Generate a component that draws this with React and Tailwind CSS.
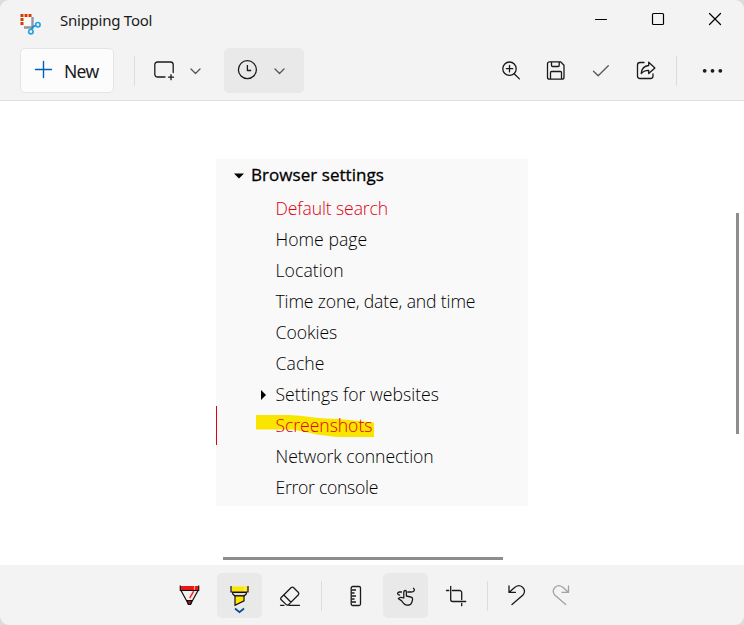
import React from "react";

function Icon({ size = 24, className = "", children }) {
  return (
    <svg width={size} height={size} viewBox={`0 0 ${size} ${size}`} fill="none" stroke="currentColor" strokeWidth="1.3" strokeLinecap="round" strokeLinejoin="round" className={`shrink-0 ${className}`}>
      {children}
    </svg>
  );
}

function Chevron({ className }) {
  return (
    <Icon size={12} className={className}>
      <path d="M1 4 5.500 8.500 10 4" />
    </Icon>
  );
}

function TitleBar() {
  return (
    <header className="flex h-[41px] shrink-0 items-start pl-[19px]">
      <svg width="24" height="24" viewBox="0 0 24 24" className="mt-[12px] shrink-0" fill="none">
        <path d="M3 13V3h10v10z" fill="#fafafa" />
        <path d="M13.500 5v10.500H5" stroke="#9298a0" strokeWidth="2.400" />
        <path d="M1.500 3.500h11" stroke="#d83b01" strokeWidth="3" strokeDasharray="3 1" />
        <path d="M3 6v8" stroke="#d83b01" strokeWidth="3" strokeDasharray="3 1" />
        <path d="M12.400 17.500 14 14.800l2.500-1.300" stroke="#1b8fd6" strokeWidth="1.800" />
        <circle cx="18.900" cy="12.700" r="2.200" stroke="#25a3e8" strokeWidth="1.700" />
        <circle cx="11.900" cy="19.700" r="2.200" stroke="#25a3e8" strokeWidth="1.700" />
      </svg>
      <span className="ml-[17px] mt-[9px] text-[15px] leading-[22px] tracking-[-0.250px]">Snipping Tool</span>
      <div className="ml-auto mr-[17px] mt-[7px] flex gap-[33px] text-black">
        <Icon><path d="M6.500 12.500h11" strokeWidth="1.200" /></Icon>
        <Icon><rect x="6.500" y="6.500" width="11" height="11" rx="1" strokeWidth="1.200" /></Icon>
        <Icon><path d="m6.500 6.500 11 11m0-11-11 11" strokeWidth="1.200" /></Icon>
      </div>
    </header>
  );
}

function Toolbar() {
  return (
    <div className="flex h-[60px] shrink-0 items-center border-b border-[#dedede] pl-5">
      <button className="flex h-[45px] w-[94px] items-center rounded-[5px] border border-[#e5e5e5] bg-[#fcfcfc] pl-[10px]">
        <Icon className="text-[#005fb8]"><path d="M12.500 2.500v16M4.500 10.500h16" strokeWidth="1.400" /></Icon>
        <span className="ml-[9px] mt-[2px] text-[17.500px] tracking-[-0.700px]">New</span>
      </button>
      <div className="ml-5 h-[30px] w-px bg-[#dcdcdc]" />
      <Icon className="ml-[17px]">
        <path d="M13 18H5.500A2.700 2.700 0 0 1 2.800 15.300V5.700A2.700 2.700 0 0 1 5.500 3h13a2.700 2.700 0 0 1 2.700 2.700v7.800M19 15.700v5M16.500 18.200h5" />
      </Icon>
      <Chevron className="ml-[14px] text-[#555]" />
      <div className="ml-[22px] flex h-[45px] w-20 items-center rounded-[5px] bg-[#e9e9e9] pl-[11px]">
        <Icon>
          <circle cx="12.400" cy="10.700" r="9" />
          <path d="M12.400 6v5.500h3.800" strokeLinecap="butt" />
        </Icon>
        <Chevron className="ml-[15px] text-[#555]" />
      </div>
      <div className="ml-auto flex items-center gap-[21px]">
        <Icon>
          <circle cx="10.500" cy="9.700" r="6.700" />
          <path d="M10.500 6.500v6.400M7.300 9.700h6.400M15.400 15l5 4.900" />
        </Icon>
        <Icon>
          <path d="M5.500 2.800h11l3.500 3.500v11.900a2 2 0 0 1-2 2H5.500a2 2 0 0 1-2-2V4.800a2 2 0 0 1 2-2ZM7.500 3v3.500a1 1 0 0 0 1 1h5.700a1 1 0 0 0 1-1V3M6.500 20v-6.500a1 1 0 0 1 1-1h9a1 1 0 0 1 1 1V20" />
        </Icon>
        <Icon className="text-[#555]"><path d="m4.500 12.300 4.700 4.500L19.300 6.800" /></Icon>
        <Icon>
          <path d="M10 3.500H6A2.500 2.500 0 0 0 3.500 6v11A2.500 2.500 0 0 0 6 19.500h10.500A2.500 2.500 0 0 0 19 17v-2" />
          <path d="M14.700 3.200 20.900 8.900 14.700 14.600v-3.300c-3.500-.1-5.600.8-7.500 3.300.4-4.800 3-7.700 7.500-8.100Z" />
        </Icon>
      </div>
      <div className="ml-[18px] h-[30px] w-px bg-[#dcdcdc]" />
      <Icon className="ml-[23px] mr-[20px]">
        <g fill="currentColor" stroke="none"><circle cx="4.700" cy="11.800" r="1.900" /><circle cx="12.500" cy="11.800" r="1.900" /><circle cx="20.300" cy="11.800" r="1.900" /></g>
      </Icon>
    </div>
  );
}

function MenuItem({ children, className }) {
  return <li className={`flex h-[31px] items-center pl-[59.500px] ${className}`}>{children}</li>;
}

function SettingsPanel() {
  return (
    <section className="relative h-[347px] w-[312px] shrink-0 bg-[#f9f9f9] font-['Open_Sans','Noto_Sans',sans-serif] text-[17.600px] font-light text-black">
      <h2 className="flex h-[34px] items-center pl-[18px] pb-[2px] text-[17px] font-medium">
        <svg width="10" height="6" viewBox="0 0 10 6" className="mt-[1px] shrink-0"><path d="M0 .5h10L5 5.500z" /></svg>
        <span className="ml-[7px] tracking-[0.050px] [-webkit-text-stroke:0.3px_black]">Browser settings</span>
      </h2>
      <svg width="120" height="23" viewBox="0 0 120 23" className="absolute left-[40px] top-[256px]">
        <path d="M0 0h33c20 1 30 4 50 4l35 3.500V22H86c-20-.5-30-4-50-7.500H0z" fill="#fae500" />
      </svg>
      <div className="absolute left-0 top-[247px] h-[39px] w-px bg-[#e00010]" />
      <ul className="relative">
        <MenuItem className="tracking-[-0.120px] text-[#e00010]">Default search</MenuItem>
        <MenuItem className="tracking-[0.030px]">Home page</MenuItem>
        <MenuItem className="tracking-[0.080px]">Location</MenuItem>
        <MenuItem className="tracking-[-0.140px]">Time zone, date, and time</MenuItem>
        <MenuItem className="tracking-[-0.020px]">Cookies</MenuItem>
        <MenuItem className="tracking-[0.080px]">Cache</MenuItem>
        <li className="flex h-[31px] items-center pl-[45px] tracking-[0.020px]">
          <svg width="5" height="10" viewBox="0 0 5 10" className="mr-[9.500px] shrink-0"><path d="M0 0v10l5-5z" /></svg>
          Settings for websites
        </li>
        <MenuItem className="tracking-[-0.060px] text-[#e00010]">Screenshots</MenuItem>
        <MenuItem className="tracking-[-0.060px]">Network connection</MenuItem>
        <MenuItem className="tracking-[-0.290px]">Error console</MenuItem>
      </ul>
    </section>
  );
}

function Canvas() {
  return (
    <main className="flex min-h-0 flex-1 bg-white">
      <div className="flex flex-1 flex-col pl-[216px] pt-[58px]">
        <SettingsPanel />
        <div className="ml-[7px] mt-[51px] h-[3px] w-[280px] bg-[#8d8d8d]" />
      </div>
      <div className="mr-[5px] mt-[112px] h-[221px] w-[3px] bg-[#8d8d8d]" />
    </main>
  );
}

function Tool({ active, className = "", children }) {
  return (
    <div className={`flex size-[45px] shrink-0 items-center justify-center rounded-[5px] ${active ? "bg-[#e9e9e9]" : ""} ${className}`}>
      {children}
    </div>
  );
}

function PenBar() {
  return (
    <footer className="flex h-[60px] shrink-0 items-center pb-px pt-0.5 pl-[167px]">
      <Tool>
        <svg width="23" height="23" viewBox="0 0 23 23" fill="none" stroke="#111" strokeWidth="1.200">
          <path d="M3 6.500h17l-6 11-1.500 3h-2l-1.500-3z" fill="#f3efee" />
          <path d="M2.500 2h18v4.500h-18z" fill="#e81717" stroke="none" />
          <path d="M2.300 1.500v5h18.400v-5" />
          <path d="m15.700 7.200-4 7" stroke="#f02a2a" strokeWidth="1.500" />
          <path d="m9.200 16.500 1.300 4h2l1.300-4z" fill="#c90e0e" />
          <path d="M16.500 2v3.800" stroke="#ff9b91" />
        </svg>
      </Tool>
      <Tool active className="ml-[5px]">
        <svg width="23" height="36" viewBox="0 0 23 36" fill="none" stroke="#111" strokeWidth="1.200">
          <path d="M3.500 8.500h17v5h-17z" fill="#ffe500" stroke="none" />
          <path d="M3 8v6h17V8" />
          <path d="M4.700 14.500v1.500l2 1.800h9.600l2-1.800v-1.500z" fill="#ddd" />
          <path d="M7 18v9.300l9-4.500V18z" fill="#ffe500" />
          <path d="M17 9v4" stroke="#fff7a0" />
          <path d="m7 30.500 4.500 3.700 4.500-3.700" stroke="#064a9f" strokeWidth="1.800" />
        </svg>
      </Tool>
      <Tool className="ml-[5px]">
        <Icon>
          <path d="M3.200 13.500 13 3.700a2 2 0 0 1 2.700 0l4.500 4.500a2 2 0 0 1 0 2.800l-9.400 9.400a2 2 0 0 1-2.800 0l-4.800-4.600a1.600 1.600 0 0 1 0-2.300ZM5.800 11l7.200 7.200M2.500 21.300h3.500M11 21.300h10.500" />
        </Icon>
      </Tool>
      <div className="ml-[9px] h-[30px] w-px bg-[#dcdcdc]" />
      <Tool className="ml-[11px]">
        <Icon>
          <rect x="7.200" y="2.500" width="9.300" height="19" rx="1.500" />
          <path d="M7.500 6H12M7.500 9h3M7.500 12h4.500M7.500 15h3M7.500 18H12" strokeLinecap="butt" />
        </Icon>
      </Tool>
      <Tool active className="ml-[5px]">
        <Icon>
          <path d="M7.500 8H5.500C3 8 3 11 5.500 11M13.800 8h3.200c3 0 4.500-2 2.500-3.700" />
          <path d="M9.800 14V8c0-2 2.600-2 2.600 0v4l4.300 1c1.500.3 2.100 1.300 1.800 2.800l-.6 2.400c-.6 2.300-2.500 3.200-4.700 3-1.700-.1-2.900-.9-3.800-2.100l-2-2.500-3-1.900c1-1.700 3-1.700 5.400-.7Z" />
        </Icon>
      </Tool>
      <Tool className="ml-[5px]">
        <Icon>
          <path d="M6.700 2.500v13a2 2 0 0 0 2 2h13M2.500 6.500h2.300M8.500 6.500h7.200a2 2 0 0 1 2 2v7M17.700 19.500v2.200" />
        </Icon>
      </Tool>
      <div className="ml-[9px] h-[30px] w-px bg-[#dcdcdc]" />
      <Tool className="ml-[6px]">
        <Icon><path d="M4 2v6.400h6.400M4.500 8 9 4c6-5.700 13.800 1.300 9 7L7 20.600" /></Icon>
      </Tool>
      <Tool className="-ml-px text-[#a2a2a2]">
        <Icon><path d="M19.500 2v6.400h-6.400M19 8l-4.300-4c-6-5.700-13.800 1.300-9 7l11 9.600" /></Icon>
      </Tool>
    </footer>
  );
}

export default function App() {
  return (
    <div className="h-[625px] w-[744px] bg-[#dcdcdc]">
      <div className="flex h-full flex-col overflow-hidden rounded-[9px] bg-[#f3f3f3] font-['Noto_Sans','Open_Sans',sans-serif] text-[#1a1a1a]">
        <TitleBar />
        <Toolbar />
        <Canvas />
        <PenBar />
      </div>
    </div>
  );
}
